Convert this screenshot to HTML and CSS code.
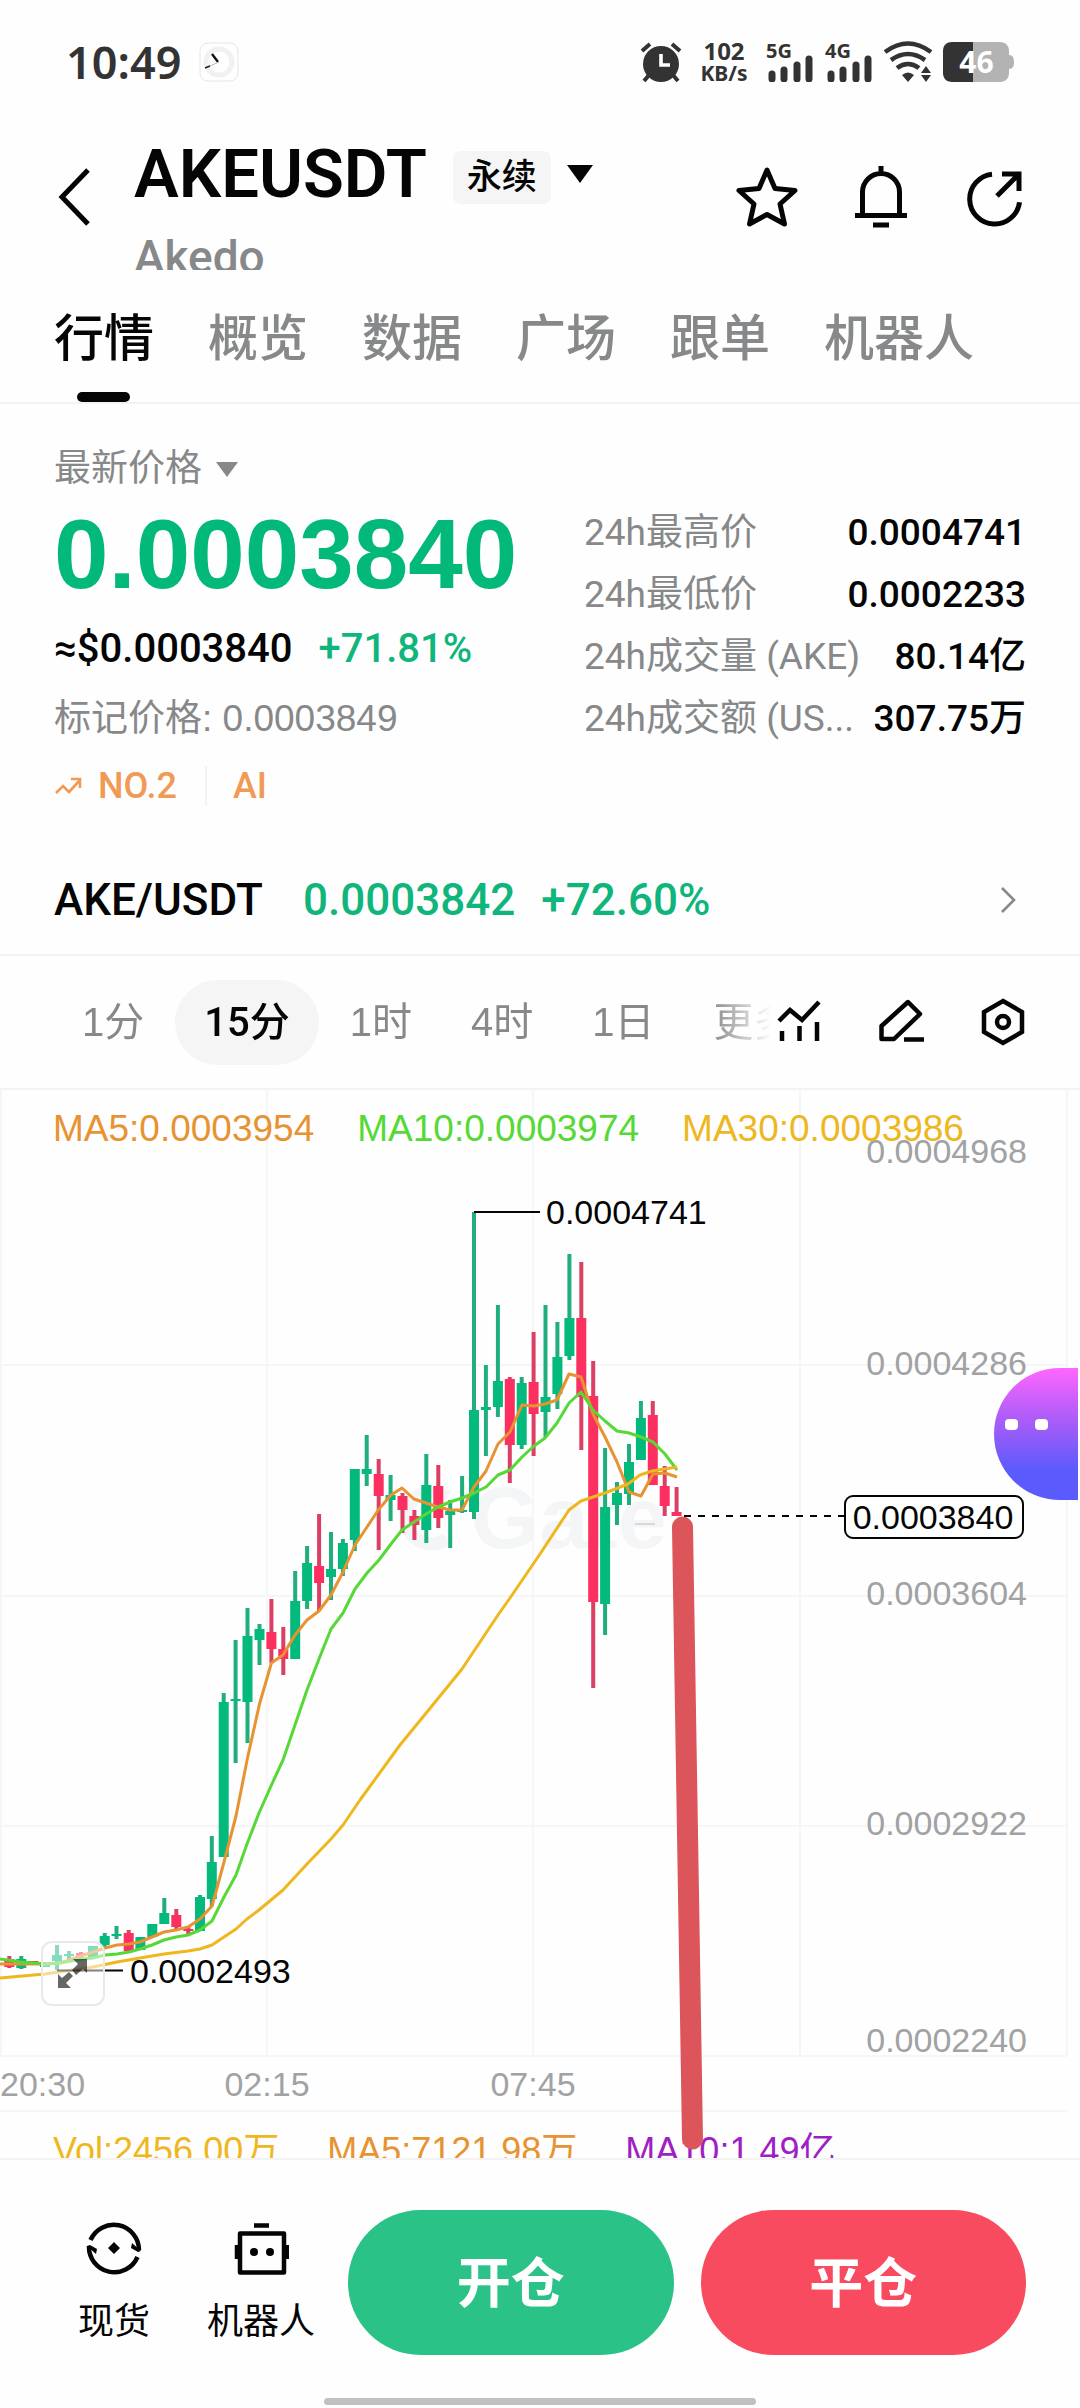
FILE: index.html
```html
<!DOCTYPE html>
<html lang="zh-CN">
<head>
<meta charset="utf-8">
<meta name="viewport" content="width=device-width, initial-scale=1">
<title>AKEUSDT 永续</title>
<link rel="stylesheet" href="styles.css">
</head>
<body>
<div class="status">
  <div class="status-left">
    <span class="clock">10:49</span>
    <svg class="clock-app" viewBox="0 0 40 40" width="40" height="40"><rect x="1" y="1" width="38" height="38" rx="8" fill="#fefefe" stroke="#e6e6e6"/><circle cx="20" cy="20" r="13" fill="none" stroke="#f1f1f1" stroke-width="5"/><path d="M13 12l6 8" stroke="#111" stroke-width="2.4"/><path d="M20 20L6 26" stroke="#bbb"/><path d="M6 26l5-2" stroke="#222" stroke-width="1.6"/></svg>
  </div>
  <div class="status-right">
    <svg class="alarm" viewBox="0 0 42 40" width="42" height="40"><circle cx="21" cy="22" r="18" fill="#333"/><path d="M2 9l8-7M40 9l-8-7M9 33l-5 6M33 33l5 6" stroke="#333" stroke-width="4"/><path d="M21 12v11h9" fill="none" stroke="#fff" stroke-width="3.6"/></svg>
    <div class="speed"><b class="speed-num">102</b><b class="speed-unit">KB/s</b></div>
    <div class="signal"><b>5G</b><svg viewBox="0 0 48 40" width="48" height="40"><path d="M6 32v5M18 28v9M31 23v14M43 17v20" stroke="#333" stroke-width="7" stroke-linecap="round"/></svg></div>
    <div class="signal"><b>4G</b><svg viewBox="0 0 48 40" width="48" height="40"><path d="M6 32v5M18 28v9M31 23v14M43 17v20" stroke="#333" stroke-width="7" stroke-linecap="round"/></svg></div>
    <svg class="wifi" viewBox="0 0 48 42" width="48" height="42"><g fill="none" stroke="#333" stroke-width="4.6"><path d="M1 11Q24-6 47 11"/><path d="M7 19Q24 7 41 19"/><path d="M13 27Q24 19 35 27"/></g><path d="M18 34Q24 29 30 34L24 41zM37 32l5-7 5 7zM37 34h10l-5 7z" fill="#333"/></svg>
    <div class="battery"><svg viewBox="0 0 71 40" width="71" height="40"><path d="M57 0c6 0 9 4 9 9v4c4 0 5 3 5 7s-1 7-5 7v4c0 6-4 9-9 9H30V0z" fill="#b3b3b3"/><path d="M30 0v40H9c-6 0-9-4-9-9V9c0-6 4-9 9-9z" fill="#333"/></svg><b>46</b></div>
  </div>
</div>

<header class="header">
  <button class="icon-btn back" aria-label="返回"><svg viewBox="0 0 34 58" width="34" height="58"><path d="M32 2L6 29l26 27" fill="none" stroke="#050505" stroke-width="5"/></svg></button>
  <div class="title">
    <div class="title-row"><h1>AKEUSDT</h1><span class="badge">永续</span><svg viewBox="0 0 26 18" width="26" height="18"><path d="M0 0h26L13 18z" fill="#050505"/></svg></div>
    <p class="subtitle">Akedo</p>
  </div>
  <div class="header-actions">
    <button class="icon-btn" aria-label="收藏"><svg viewBox="0 0 64 64" width="64" height="64"><path d="M32 5l8 18.500 20 2-15 13.500 4.500 20L32 49.500 14.500 59l4.500-20L4 25.500l20-2z" fill="none" stroke="#050505" stroke-width="5" stroke-linejoin="round"/></svg></button>
    <button class="icon-btn" aria-label="提醒"><svg viewBox="0 0 64 64" width="64" height="64"><path d="M13.500 50V27a18.500 18.500 0 0 1 37 0v23M6 50.500h52M24 60h16M32 1v8" fill="none" stroke="#050505" stroke-width="5"/></svg></button>
    <button class="icon-btn" aria-label="分享"><svg viewBox="0 0 64 64" width="64" height="64"><path d="M29 9.200a25 25 0 1 0 27.500 28M34 31L55 10M39 9h17v17" fill="none" stroke="#050505" stroke-width="5"/></svg></button>
  </div>
</header>

<nav class="tabs">
  <a class="tab active" href="#quote">行情</a><a class="tab" href="#overview">概览</a><a class="tab" href="#data">数据</a><a class="tab" href="#square">广场</a><a class="tab" href="#copy">跟单</a><a class="tab" href="#bot">机器人</a>
</nav>

<main>
<section class="quote" id="quote">
  <div class="quote-main">
    <button class="price-kind">最新价格<svg viewBox="0 0 22 15" width="22" height="15"><path d="M0 0h22L11 15z" fill="#868889"/></svg></button>
    <strong class="price">0.0003840</strong>
    <p class="fiat"><span>≈$0.0003840</span><span class="up">+71.81%</span></p>
    <p class="mark">标记价格: 0.0003849</p>
    <p class="tags"><svg viewBox="0 0 28 20" width="28" height="20"><path d="M2 17l7-7 6 6L26 4M17 3h9v9" fill="none" stroke="#f09a55" stroke-width="2.600"/></svg><a class="rank" href="#rank">NO.2</a><a class="topic" href="#ai">AI</a></p>
  </div>
  <dl class="stats">
    <div><dt>24h最高价</dt><dd>0.0004741</dd></div>
    <div><dt>24h最低价</dt><dd>0.0002233</dd></div>
    <div><dt>24h成交量 (AKE)</dt><dd>80.14亿</dd></div>
    <div><dt>24h成交额 (US...</dt><dd>307.75万</dd></div>
  </dl>
</section>

<a class="pair" href="#spot"><span class="pair-name">AKE/USDT</span><span class="up">0.0003842</span><span class="up pair-change">+72.60%</span><svg viewBox="0 0 18 28" width="18" height="28"><path d="M2 2l12 12L2 26" fill="none" stroke="#868889" stroke-width="2.600"/></svg></a>

<div class="toolbar">
  <div class="intervals">
    <button>1分</button><button class="active">15分</button><button>1时</button><button>4时</button><button>1日</button><button>更多</button>
  </div>
  <div class="tools">
    <button class="icon-btn" aria-label="指标"><svg viewBox="0 0 48 48" width="48" height="48"><path d="M4 23l11-11 12 10L44 4M7 33v10M24.500 28v15M42 24v19" fill="none" stroke="#050505" stroke-width="4.500"/></svg></button>
    <button class="icon-btn" aria-label="画线"><svg viewBox="0 0 48 48" width="48" height="48"><path d="M4.500 41V28L31 4l12 12-26 25zM27 41.500h20" fill="none" stroke="#050505" stroke-width="4.500" stroke-linejoin="round"/></svg></button>
    <button class="icon-btn" aria-label="设置"><svg viewBox="0 0 48 48" width="48" height="48"><path d="M24 3l19 11v20L24 45 5 34V14z" fill="none" stroke="#050505" stroke-width="4.500"/><circle cx="24" cy="24" r="6" fill="none" stroke="#050505" stroke-width="4.500"/></svg></button>
  </div>
</div>

<section class="chart">
  <p class="legend"><span class="ma5">MA5:0.0003954</span><span class="ma10">MA10:0.0003974</span><span class="ma30">MA30:0.0003986</span></p>
  <svg class="kline" viewBox="0 1090 1080 1022">
    <path class="grid" d="M1 1090V2056M267 1090V2056M533 1090V2056M800 1090V2056M1067 1090V2056M0 1365H1067M0 1596H1067M0 1826H1067M0 2056H1067M0 2111H1067"/>
    <g class="watermark"><path d="M447 1497a26 26 0 1 0 0 42" fill="none" stroke-width="13"/><text x="471" y="1548">Gate</text></g>
    <path class="wick up-stroke" d="M21.300 1956V1969M57 1945V1970M69 1951V1959M104.700 1933V1947M116.500 1926V1939M164.300 1898V1924M200 1895V1931M211.800 1836V1906M223.700 1693V1857M235.600 1640V1763M247.500 1608V1743M259.500 1624V1665M295.200 1571V1659M307.100 1546V1609M331 1532V1600M342.900 1539V1576M354.800 1469V1551M366.700 1435V1486M390.600 1475V1521M426.300 1454V1543M450.200 1500V1548M462.100 1476V1513M474 1212V1519M485.900 1365V1456M497.900 1305V1417M521.700 1377V1449M545.500 1305V1437M557.400 1322V1409M569.400 1254V1360M605.100 1448V1635M617 1482V1525M629 1444V1505M640.900 1401V1460"/>
    <path class="wick down-stroke" d="M9.300 1956V1968M81 1952V1958M128.700 1930V1951M176.300 1909V1930M188.300 1926V1934M271.400 1599V1663M283.300 1627V1675M319.100 1514V1611M378.700 1459V1550M402.500 1493V1533M414.400 1510V1540M438.300 1465V1528M509.800 1377V1483M533.600 1332V1456M581.300 1262V1450M593.200 1361V1688M652.800 1401V1485M664.700 1466V1516M676.600 1487V1516"/>
    <path class="body up-body" d="M21.300 1959V1968M45 1962V1967M57 1955V1961M69 1954V1956M93 1946V1957M104.700 1936V1945M116.500 1934V1936M140.400 1937V1950M152.300 1924V1937M164.300 1913V1924M200 1897V1931M211.800 1862V1899M223.700 1702V1857M235.600 1699V1701M247.500 1636V1702M259.500 1629V1640M295.200 1601V1659M307.100 1563V1601M331 1569V1577M342.900 1543V1569M354.800 1469V1540M366.700 1469V1474M390.600 1495V1500M426.300 1485V1530M450.200 1511V1515M462.100 1510V1512M474 1410V1512M485.900 1407V1410M497.900 1381V1407M521.700 1383V1445M545.500 1397V1412M557.400 1357V1394M569.400 1318V1356M605.100 1507V1604M617 1493V1505M629 1462V1494M640.900 1418V1460"/>
    <path class="body down-body" d="M9.300 1959V1967M33.300 1961V1964M81 1953V1956M128.700 1933V1951M176.300 1915V1927M188.300 1929V1931M271.400 1632V1649M283.300 1649V1659M319.100 1566V1583M378.700 1474V1496M402.500 1496V1510M414.400 1516V1525M438.300 1486V1518M509.800 1379V1445M533.600 1382V1414M581.300 1318V1397M593.200 1396V1602M652.800 1415V1485M664.700 1486V1506M676.600 1512V1516"/>
    <polyline class="line ma5" points="0,1964 45,1964 60,1963 81,1956 93,1952 105,1948 117,1945 129,1944 140,1942 152,1937 164,1932 176,1930 188,1927 200,1919 212,1906 217,1888 224,1862 236,1816 247.500,1758 259.500,1704 271.400,1663 283,1655 295,1635 307,1620 319,1611 331,1595 343,1572 355,1545 367,1527 379,1509 391,1495 402,1488 414,1499 426,1503 438,1507 450,1510 462,1510 474,1487 486,1471 498,1444 510,1432 522,1405 534,1406 545,1404 557,1400 569,1374 581,1377 593,1414 605,1437 617,1462 629,1492 641,1496 653,1474 665,1473 677,1477"/>
    <polyline class="line ma10" points="0,1959 21,1962 45,1964 60,1963 81,1959 93,1958 105,1955 117,1954 129,1952 140,1949 152,1945 164,1940 176,1937 188,1935 200,1930 212,1921 224,1897 236,1875 247,1844 259,1813 271,1786 283,1760 295,1725 307,1690 319,1659 331,1629 343,1613 355,1589 367,1573 379,1560 391,1544 402,1530 414,1522 426,1514 438,1507 450,1502 462,1498 474,1493 486,1487 498,1475 510,1470 522,1457 534,1446 545,1438 557,1423 569,1403 581,1392 593,1410 605,1421 617,1431 629,1433 641,1437 653,1442 665,1454 677,1470"/>
    <polyline class="line ma30" points="0,1978 45,1974 93,1967 117,1962 140,1958 164,1954 188,1951 200,1949 212,1945 224,1937 236,1929 247,1919 259,1910 283,1890 307,1864 331,1839 343,1825 360,1800 400,1745 427,1712 462,1669 498,1615 510,1598 540,1554 569,1510 581,1501 593,1497 605,1493 628,1484 640,1475 652,1471 677,1467"/>
    <path d="M635 1524h20" stroke="#bbb" stroke-width="1"/>
    <path class="leader" d="M474 1212H540M57 1970.500H123"/>
    <text class="note" x="546" y="1224">0.0004741</text>
    <text class="note" x="130" y="1983">0.0002493</text>
    <g class="axis">
      <text x="1027" y="1163" text-anchor="end">0.0004968</text>
      <text x="1027" y="1375" text-anchor="end">0.0004286</text>
      <text x="1027" y="1605" text-anchor="end">0.0003604</text>
      <text x="1027" y="1835" text-anchor="end">0.0002922</text>
      <text x="1027" y="2052" text-anchor="end">0.0002240</text>
      <text x="0" y="2096">20:30</text>
      <text x="267" y="2096" text-anchor="middle">02:15</text>
      <text x="533" y="2096" text-anchor="middle">07:45</text>
    </g>
    <path class="current" d="M684 1516H845"/>
    <rect x="845" y="1496" width="178" height="42" rx="8" fill="#fff" stroke="#050505" stroke-width="2"/>
    <text class="note" x="933" y="1529" text-anchor="middle">0.0003840</text>
    <rect x="42" y="1942" width="62" height="63" rx="10" fill="#fff" fill-opacity=".5" stroke="#e9e9e9" stroke-width="2"/>
    <path d="M87 1959v14l-4-4-7 6-4-5 6-6-5-5zM58 1988v-14l4 4 7-6 4 4-7 7 5 5z" fill="#000" fill-opacity=".6"/>
    <path d="M682.500 1527L692.500 2139" stroke="#db555a" stroke-width="21" stroke-linecap="round"/>
  </svg>
  <button class="assistant" aria-label="助手"><i></i><i></i></button>
  <p class="volume"><span class="ma30">Vol:2456.00万</span><span class="ma5">MA5:7121.98万</span><span class="vol10">MA10:1.49亿</span></p>
</section>
</main>

<footer class="bottom">
  <div class="actions">
    <a class="nav" href="#spot"><svg viewBox="0 0 56 56" width="56" height="56"><g fill="none" stroke="#050505" stroke-width="4.500"><path d="M4.500 20A25.300 25.300 0 0 1 53 30"/><path d="M51.500 37A25.300 25.300 0 0 1 3 26"/></g><path d="M46 23l9 8-3 1-7-4zM10 34L1 26l3-1 7 4zM28 22l6 6-6 6-6-6z" fill="#050505"/></svg>现货</a>
    <a class="nav" href="#bot"><svg viewBox="0 0 56 56" width="56" height="56"><path d="M7 13.500h44v39H7zM21 5.500h15M4 25v14M54 25v14" fill="none" stroke="#050505" stroke-width="4.500" stroke-linejoin="round"/><circle cx="21" cy="32" r="4"/><circle cx="37" cy="32" r="4"/></svg>机器人</a>
    <button class="trade open">开仓</button>
    <button class="trade close">平仓</button>
  </div>
  <div class="home"></div>
</footer>
</body>
</html>
```
FILE: styles.css
```css
* { box-sizing: border-box; }
body, h1, p, dl, dd { margin: 0; }
body {
  background: #fefefe;
  color: #050505;
  font-family: Roboto, "Noto Sans CJK SC", sans-serif;
  font-weight: 500;
  overflow-x: hidden;
}
a { color: inherit; text-decoration: none; }
button { font: inherit; color: inherit; background: none; border: 0; padding: 0; }
svg { display: block; flex: none; }
.icon-btn { display: flex; }

.status {
  display: flex;
  justify-content: space-between;
  align-items: center;
  height: 124px;
  padding: 0 66px;
  color: #333;
  font-family: "Noto Sans", sans-serif;
}
.status-left { display: flex; align-items: center; gap: 18px; }
.clock { font-size: 45px; font-weight: 600; line-height: 62px; }
.status-right { display: flex; align-items: center; gap: 11px; }
.speed { display: flex; flex-direction: column; align-items: center; width: 52px; margin: 0 5px; }
.speed-num { font-size: 24px; line-height: 22px; }
.speed-unit { font-size: 21px; line-height: 22px; }
.signal { position: relative; }
.signal b { position: absolute; left: 0; top: 0; font-size: 20px; line-height: 18px; }
.battery { position: relative; }
.battery b { position: absolute; inset: 0 4px 0 0; color: #fff; font-size: 30px; line-height: 40px; text-align: center; }

.header { display: flex; align-items: center; height: 146px; padding: 0 53px 0 56px; overflow: hidden; }
.title { flex: 1; align-self: stretch; padding: 11px 0 0 44px; }
.title-row { display: flex; align-items: center; height: 78px; }
.title-row h1 { font-size: 67px; line-height: 78px; font-weight: 600; }
.badge { margin: 6px 16px 0 26px; padding: 0 14px; border-radius: 8px; background: #f5f5f5; font-size: 35px; line-height: 53px; }
.subtitle { margin-top: 14px; color: #868889; font-size: 46px; line-height: 60px; }
.header-actions { display: flex; gap: 50px; }

.tabs { display: flex; gap: 54px; padding: 0 54px; border-bottom: 2px solid #f2f3f3; white-space: nowrap; }
.tab { position: relative; padding-top: 6px; color: #868889; font-size: 50px; line-height: 126px; }
.tab.active { color: #050505; }
.tab.active::after { content: ""; position: absolute; left: 50%; bottom: 0; width: 53px; height: 10px; margin-left: -27px; border-radius: 5px; background: #050505; }

.up { color: #10b57c; }
.quote { display: grid; grid-template-columns: 1fr 442px; padding: 42px 54px 40px; }
.quote-main { display: flex; flex-direction: column; align-items: flex-start; }
.price-kind { display: flex; align-items: center; gap: 14px; color: #868889; font-size: 37px; font-weight: 400; line-height: 46px; }
.price { margin-top: 10px; color: #02b97a; font-family: "Liberation Sans", sans-serif; font-size: 98px; font-weight: 700; line-height: 104px; }
.fiat { display: flex; gap: 26px; margin-top: 18px; font-size: 40px; line-height: 50px; }
.mark { margin-top: 22px; color: #868889; font-family: "Liberation Sans", "Noto Sans CJK SC", sans-serif; font-size: 37px; font-weight: 400; line-height: 46px; }
.tags { display: flex; align-items: center; margin-top: 24px; color: #f09a55; font-size: 36px; line-height: 40px; }
.rank { margin-left: 16px; padding-right: 28px; border-right: 2px solid #f3f3f3; }
.topic { margin-left: 26px; }
.stats { padding-top: 56px; }
.stats div { display: flex; justify-content: space-between; gap: 12px; font-size: 37px; line-height: 62px; white-space: nowrap; }
.stats dt { min-width: 0; overflow: hidden; text-overflow: ellipsis; color: #868889; font-weight: 400; }

.pair { display: flex; align-items: center; padding: 0 62px 0 54px; font-size: 44px; line-height: 108px; border-bottom: 2px solid #f2f3f3; }
.pair-name { margin-right: 40px; }
.pair-change { margin-left: 26px; flex: 1; }

.toolbar { display: flex; align-items: center; justify-content: space-between; height: 134px; padding: 0 53px 0 54px; border-bottom: 2px solid #f2f3f3; }
.intervals { display: flex; gap: 3px; flex: 1; min-width: 0; overflow: hidden; white-space: nowrap; -webkit-mask-image: linear-gradient(to left, transparent 4px, #000 64px); mask-image: linear-gradient(to left, transparent 4px, #000 64px); }
.intervals button { flex: none; padding: 0 28px; border-radius: 43px; color: #868889; font-family: "Liberation Sans", "Noto Sans CJK SC", sans-serif; font-size: 40px; font-weight: 400; line-height: 85px; }
.intervals .active { padding: 0 29px; background: #f5f5f5; color: #050505; font-family: Roboto, "Noto Sans CJK SC", sans-serif; font-weight: 500; }
.tools { display: flex; gap: 54px; }

.chart { position: relative; overflow: hidden; font-family: "Liberation Sans", "Noto Sans CJK SC", sans-serif; font-weight: 400; }
.legend, .volume { display: flex; padding: 16px 53px 0; line-height: 46px; white-space: nowrap; }
.legend { position: absolute; z-index: 2; top: 0; left: 0; gap: 43px; font-size: 37px; }
.volume { height: 46px; overflow: hidden; gap: 48px; font-size: 36px; }
.ma5 { color: #e89331; stroke: #e89331; }
.ma10 { color: #56d936; stroke: #56d936; }
.ma30 { color: #efb71e; stroke: #efb71e; }
.vol10 { color: #a01fc4; }
.kline { position: relative; z-index: 1; width: 100%; height: auto; overflow: visible; fill: none; }
.grid { stroke: #f5f6f7; stroke-width: 2; }
.watermark { stroke: #f4f5f6; }
.watermark text { fill: #f4f5f6; stroke: none; font-size: 88px; font-weight: 700; }
.wick { stroke-width: 4; }
.body { stroke-width: 10; }
.up-stroke { stroke: #1fae7c; }
.up-body { stroke: #04b97c; }
.down-stroke { stroke: #db3f64; }
.down-body { stroke: #fb2f60; }
.line { stroke-width: 3; stroke-linejoin: round; }
.leader { stroke: #050505; stroke-width: 2; }
.current { stroke: #050505; stroke-width: 2; stroke-dasharray: 7 7; }
.note { fill: #050505; font-size: 34px; }
.axis { fill: #a0a2a3; font-size: 34px; }
.assistant { position: absolute; z-index: 2; top: 278px; right: 2px; display: flex; gap: 17px; width: 84px; height: 132px; padding: 51px 0 0 11px; border-radius: 66px 0 0 66px; background: linear-gradient(#ff66ff, #a55cf8 42%, #5b5bfd 78%); }
.assistant i { width: 13px; height: 11px; border-radius: 4px; background: #fff; }

.bottom { border-top: 2px solid #f2f3f3; padding: 50px 54px 3px; }
.actions { display: flex; gap: 27px; }
.nav { display: flex; flex-direction: column; align-items: center; gap: 24px; width: 120px; padding-top: 10px; font-size: 36px; font-weight: 400; line-height: 44px; white-space: nowrap; }
.trade { flex: 1; height: 145px; padding-bottom: 6px; border-radius: 73px; color: #fff; font-size: 54px; font-weight: 600; }
.open { background: #2bc287; }
.close { background: #f84b5f; }
.home { width: 432px; height: 7px; margin: 43px auto 0; border-radius: 4px; background: #c1c1c1; }
```
